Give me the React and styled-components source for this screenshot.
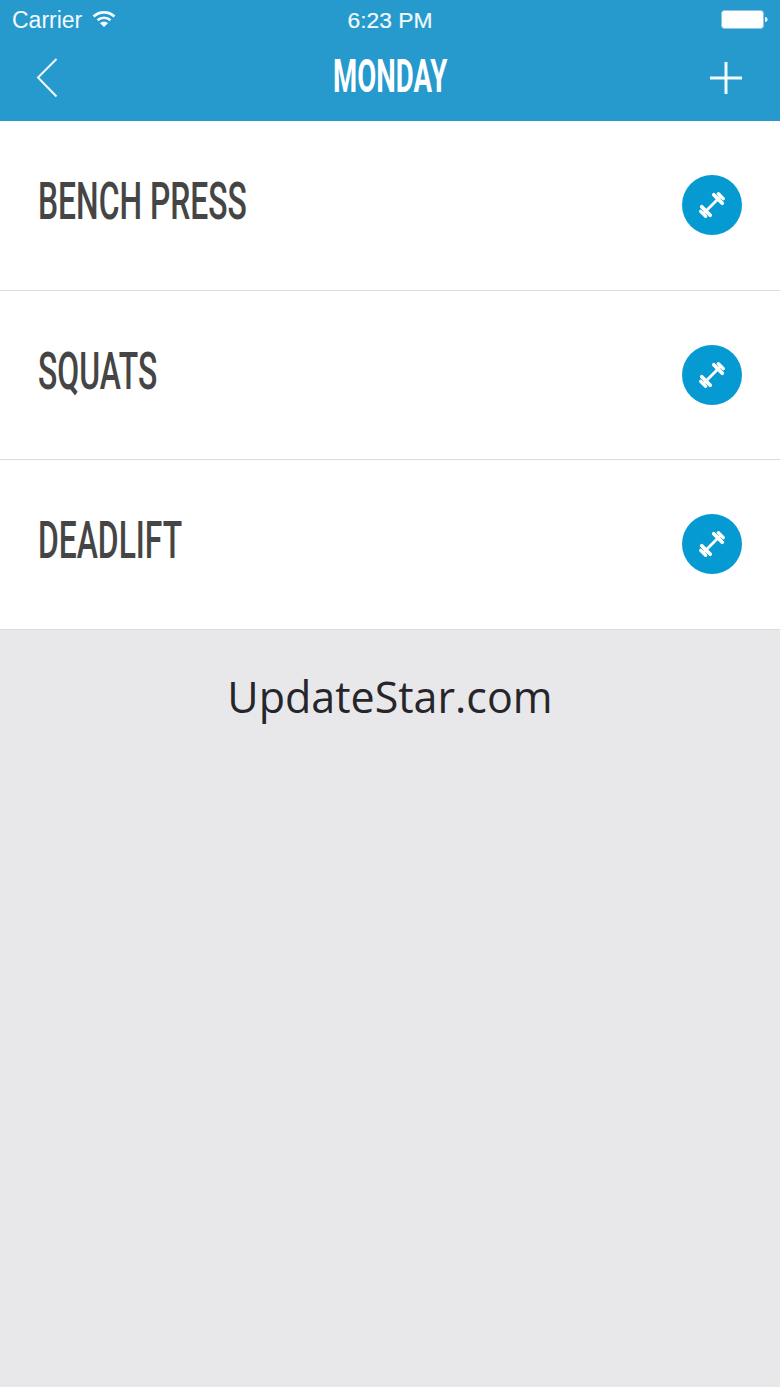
import React from 'react';
import styled, { createGlobalStyle } from 'styled-components';

const Global = createGlobalStyle`
  html, body { margin: 0; padding: 0; background: #e8e8ea; }
  * { box-sizing: border-box; }
`;
const Page = styled.div`
  width: 780px; height: 1387px; background: #e8e8ea; display: flex; flex-direction: column; overflow: hidden;
`;
const Header = styled.header`
  height: 121px; flex: none; background: #2699cd; color: #fff; display: flex; flex-direction: column;
`;
const StatusBar = styled.div`
  height: 40px; flex: none; display: grid; grid-template-columns: 1fr auto 1fr; align-items: center; padding: 0 12px;
  font-family: "Liberation Sans", Arial, sans-serif; font-size: 23px; color: #f2fafd;
`;
const Carrier = styled.div`
  display: flex; align-items: center; gap: 10px;
`;
const WifiSlot = styled.span`
  display: flex; margin-top: -3px;
`;
const Time = styled.div`
  font-size: 22.800px; font-weight: 400; -webkit-text-stroke: 0.2px #f2fafd;
`;
const Battery = styled.div`
  justify-self: end; display: flex; align-items: center; margin-top: -1px;
`;
const NavBar = styled.div`
  flex: 1; display: grid; grid-template-columns: 1fr auto 1fr; align-items: center; padding: 0 36px 8px;
`;
const NavLeft = styled.div`
  display: flex; padding-top: 3px;
`;
const NavRight = styled.div`
  display: flex; justify-content: flex-end; padding-top: 2px; margin-right: 1px;
`;
const CondensedText = styled.span`
  display: inline-block; white-space: nowrap; font-family: Roboto, "Liberation Sans", sans-serif;
  font-size: ${p => p.$size}px; font-weight: ${p => p.$weight}; color: ${p => p.$color};
  line-height: 1; transform: scaleX(${p => p.$sx}); transform-origin: ${p => p.$origin};
`;
const TitleBox = styled.div`
  width: 116px; display: flex; justify-content: center; margin-top: -2px;
`;
const List = styled.ul`
  list-style: none; margin: 0; padding: 0; background: #fff;
`;
const Row = styled.li`
  height: 169.700px; display: flex; justify-content: space-between; align-items: flex-start; padding: 54px 38px 0;
  border-bottom: 1px solid #dcdcde;
`;
const RowLabel = styled.div`
  margin-top: 1px; width: 0; flex: 1;
`;
const Badge = styled.div`
  width: 60px; height: 60px; flex: none; border-radius: 50%; background: #059ad2; display: flex; align-items: center; justify-content: center;
`;
const Footer = styled.div`
  flex: 1; text-align: center; padding-top: 40px; color: #26262a;
  font-family: "Open Sans", "Noto Sans", sans-serif; font-weight: 400; font-size: 43px; line-height: 54px;
`;

const Wifi = () => (
  <svg width="24" height="18" viewBox="0 0 24 18" fill="none" stroke="#f2fafd" strokeWidth="2.6">
    <path d="M1.500 6.500C7.500 1 16.500 1 22.500 6.500" />
    <path d="M5.500 10.200C9.300 7 14.700 7 18.500 10.200" />
    <path d="M12 17L8 13.200C10.300 11.400 13.700 11.400 16 13.200Z" fill="#f2fafd" stroke="none" />
  </svg>
);
const BatteryIcon = () => (
  <svg width="47" height="20" viewBox="0 0 47 20">
    <rect x="0.500" y="0.500" width="42" height="18" rx="3" fill="#fff" stroke="#8cc8e4" />
    <path d="M44 7c1.800 0 2.500 1 2.500 2.500S45.800 12 44 12Z" fill="#e5f4fa" />
  </svg>
);
const Back = () => (
  <svg width="22" height="40" viewBox="0 0 22 40" fill="none" stroke="#f2fafd" strokeWidth="2">
    <path d="M20.500 1L2 19.500 20.500 38.500" />
  </svg>
);
const Plus = () => (
  <svg width="34" height="34" viewBox="0 0 34 34" stroke="#f2fafd" strokeWidth="3">
    <path d="M17 1V33M1 17H33" />
  </svg>
);
const Dumbbell = () => (
  <svg width="36" height="36" viewBox="0 0 36 36" stroke="#fff" fill="none">
    <g transform="rotate(-45 18 18)">
      <path d="M6 18H30" strokeWidth="2.800" />
      <path d="M5.500 14.500V21.500M30.500 14.500V21.500" strokeWidth="3.400" strokeLinecap="round" />
      <path d="M9.500 12V24M26.500 12V24" strokeWidth="3.800" strokeLinecap="round" />
    </g>
  </svg>
);

const rows = ['BENCH PRESS', 'SQUATS', 'DEADLIFT'];

export default function App() {
  return (
    <Page>
      <Global />
      <Header>
        <StatusBar>
          <Carrier>Carrier <WifiSlot><Wifi /></WifiSlot></Carrier>
          <Time>6:23 PM</Time>
          <Battery><BatteryIcon /></Battery>
        </StatusBar>
        <NavBar>
          <NavLeft><Back /></NavLeft>
          <TitleBox>
            <CondensedText $size={46} $weight={700} $color="#fff" $sx={0.6} $origin="center">MONDAY</CondensedText>
          </TitleBox>
          <NavRight><Plus /></NavRight>
        </NavBar>
      </Header>
      <List>
        {rows.map(name => (
          <Row key={name}>
            <RowLabel>
              <CondensedText $size={52} $weight={500} $color="#454545" $sx={0.612} $origin="left center">{name}</CondensedText>
            </RowLabel>
            <Badge><Dumbbell /></Badge>
          </Row>
        ))}
      </List>
      <Footer>UpdateStar.com</Footer>
    </Page>
  );
}
